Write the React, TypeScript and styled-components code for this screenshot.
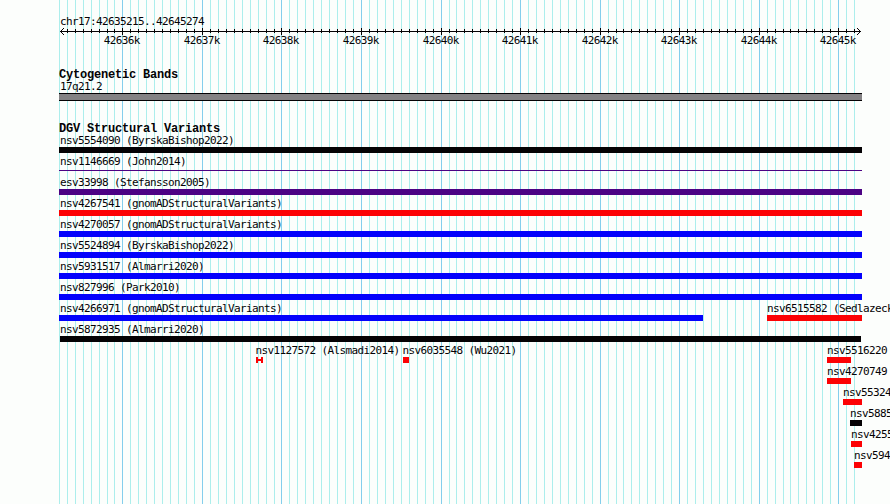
import React from "react";
import styled, { createGlobalStyle } from "styled-components";

const INK = "#040204";
const RED = "#fc0204";
const BLUE = "#0402fc";
const INDIGO = "#4c0284";

const REGION_START = 42635215;
const REGION_END = 42645274;
const PAD = 60;
const WIDTH = 800;

const toX = (bp: number) =>
  Math.round(PAD + ((bp - REGION_START) * WIDTH) / (REGION_END - REGION_START));

const marks = Array.from({ length: 101 }, (_, i) => {
  const bp = 42635200 + i * 100;
  return { bp, x: toX(bp), major: bp % 1000 === 0 };
});

const Global = createGlobalStyle`
  body { margin: 0; background: #fcfefc; overflow: hidden; }
`;

const Browser = styled.main`
  position: relative;
  width: 890px;
  height: 504px;
  overflow: hidden;
  background: #fcfefc;
  color: ${INK};
  font: 11px/13px "DejaVu Sans Mono", monospace;
  letter-spacing: -0.622px;
  white-space: pre;
`;

const GridLines = styled.svg`
  position: absolute;
  inset: 0;
`;

const Content = styled.div`
  position: relative;
  display: flex;
  flex-direction: column;
  padding-top: 15px;
`;

const RegionName = styled.div`
  height: 13px;
  padding-left: 60px;
`;

const Ruler = styled.svg`
  display: block;
  height: 7px;
`;

const RulerLabels = styled.div`
  display: grid;
  height: 13px;
  line-height: 11px;
`;

const Tick = styled.span<{ $x: number }>`
  grid-area: 1 / 1;
  margin-left: ${(p) => p.$x - 18.3}px;
`;

const Track = styled.section<{ $gap: number }>`
  margin-top: ${(p) => p.$gap}px;
`;

const TrackTitle = styled.h2`
  height: 12px;
  margin: 0 0 0 59px;
  font: bold 12px/15px "Liberation Mono", monospace;
  letter-spacing: -0.2px;
`;

const BandName = styled.div`
  height: 13px;
  padding-left: 60px;
`;

const Band = styled.div`
  box-sizing: border-box;
  width: 803px;
  height: 8px;
  margin-left: 59px;
  background: #848284;
  border: solid ${INK};
  border-width: 1px 0;
`;

const Row = styled.div`
  display: grid;
  height: 21px;
`;

const Feature = styled.div<{ $x: number }>`
  grid-area: 1 / 1;
  margin-left: ${(p) => p.$x}px;
`;

const FeatureName = styled.div<{ $indent: number }>`
  height: 13px;
  text-indent: ${(p) => p.$indent}px;
`;

const Bar = styled.div<{ $w: number; $color: string; $thin?: boolean }>`
  width: ${(p) => p.$w}px;
  height: ${(p) => (p.$thin ? 1 : 6)}px;
  margin-top: ${(p) => (p.$thin ? 2 : 0)}px;
  background: ${(p) => p.$color};
`;

const Span = styled.svg`
  display: block;
`;

type Variant = {
  name: string;
  from: number;
  to: number;
  color: string;
  kind?: "thin" | "span";
  indent?: number;
};

const full = (name: string, color: string, kind?: "thin"): Variant[] => [
  { name, from: 59, to: 862, color, kind, indent: 1 },
];

const rows: Variant[][] = [
  full("nsv5554090 (ByrskaBishop2022)", INK),
  full("nsv1146669 (John2014)", INDIGO, "thin"),
  full("esv33998 (Stefansson2005)", INDIGO),
  full("nsv4267541 (gnomADStructuralVariants)", RED),
  full("nsv4270057 (gnomADStructuralVariants)", BLUE),
  full("nsv5524894 (ByrskaBishop2022)", BLUE),
  full("nsv5931517 (Almarri2020)", BLUE),
  full("nsv827996 (Park2010)", BLUE),
  [
    { name: "nsv4266971 (gnomADStructuralVariants)", from: 59, to: 703, color: BLUE, indent: 1 },
    { name: "nsv6515582 (Sedlazeck", from: 767, to: 862, color: RED },
  ],
  [{ name: "nsv5872935 (Almarri2020)", from: 60, to: 861, color: INK }],
  [
    { name: "nsv1127572 (Alsmadi2014)", from: 256, to: 263, color: RED, kind: "span", indent: -0.6 },
    { name: "nsv6035548 (Wu2021)", from: 403, to: 409, color: RED, indent: -0.6 },
    { name: "nsv5516220", from: 827, to: 851, color: RED },
  ],
  [{ name: "nsv4270749", from: 827, to: 851, color: RED }],
  [{ name: "nsv55324", from: 843, to: 862, color: RED }],
  [{ name: "nsv5885", from: 850, to: 862, color: INK }],
  [{ name: "nsv4255", from: 851, to: 862, color: RED }],
  [{ name: "nsv594", from: 854, to: 862, color: RED }],
];

export default function App() {
  return (
    <Browser>
      <Global />
      <GridLines width="890" height="504" shapeRendering="crispEdges">
        {marks.map((m) => (
          <rect key={m.bp} x={m.x} y={0} width={1} height={504} fill={m.major ? "#84ceec" : "#aceeec"} />
        ))}
      </GridLines>
      <Content>
        <RegionName>chr17:42635215..42645274</RegionName>
        <Ruler width="890" height="7" shapeRendering="crispEdges">
          <rect x={60} y={3} width={801} height={1} fill={INK} />
          {marks.slice(1).map((m) => (
            <rect key={m.bp} x={m.x} y={m.major ? 0 : 1} width={1} height={m.major ? 7 : 4} fill={INK} />
          ))}
          <path d="M61 2h1v1h-1zM62 1h1v1h-1zM63 0h1v1h-1zM61 4h1v1h-1zM62 5h1v1h-1zM63 6h1v1h-1z" fill={INK} />
          <path d="M859 2h1v1h-1zM858 1h1v1h-1zM857 0h1v1h-1zM859 4h1v1h-1zM858 5h1v1h-1zM857 6h1v1h-1z" fill={INK} />
        </Ruler>
        <RulerLabels>
          {marks.filter((m) => m.major).map((m) => (
            <Tick key={m.bp} $x={m.x}>{m.bp / 1000}k</Tick>
          ))}
        </RulerLabels>
        <Track $gap={20}>
          <TrackTitle>Cytogenetic Bands</TrackTitle>
          <BandName>17q21.2</BandName>
          <Band />
        </Track>
        <Track $gap={21}>
          <TrackTitle>DGV Structural Variants</TrackTitle>
          {rows.map((row) => (
            <Row key={row[0].name}>
              {row.map((v) => (
                <Feature key={v.name} $x={v.from}>
                  <FeatureName $indent={v.indent ?? 0}>{v.name}</FeatureName>
                  {v.kind === "span" ? (
                    <Span width="7" height="6" shapeRendering="crispEdges">
                      <path d="M0 0h2v2h3V0h2v6H5V4H2v2H0z" fill={v.color} />
                    </Span>
                  ) : (
                    <Bar $w={v.to - v.from} $color={v.color} $thin={v.kind === "thin"} />
                  )}
                </Feature>
              ))}
            </Row>
          ))}
        </Track>
      </Content>
    </Browser>
  );
}
